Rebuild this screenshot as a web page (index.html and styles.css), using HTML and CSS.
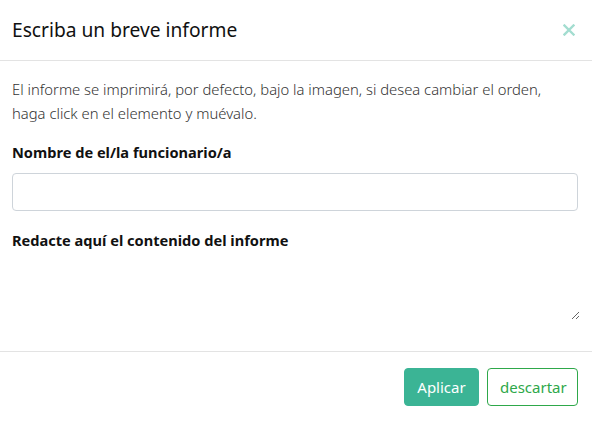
FILE: index.html
```html
<!DOCTYPE html>
<html lang="es">
<head>
<meta charset="utf-8">
<link rel="stylesheet" href="styles.css">
</head>
<body>
<div class="modal">
  <div class="modal-header">
    <h5 class="modal-title">Escriba un breve informe</h5>
    <button class="close" type="button" aria-label="Cerrar">
      <svg width="12" height="12" viewBox="0 0 12 12"><path d="M1.5 1.5L10.5 10.5M10.5 1.5L1.5 10.5" stroke="#a3ddd0" stroke-width="2.4" stroke-linecap="square"/></svg>
    </button>
  </div>
  <div class="modal-body">
    <p class="intro">El informe se imprimirá, por defecto, bajo la imagen, si desea cambiar el orden, haga click en el elemento y muévalo.</p>
    <label class="field-label" for="nombre">Nombre de el/la funcionario/a</label>
    <input class="form-control" id="nombre" type="text">
    <label class="field-label second" for="contenido">Redacte aquí el contenido del informe</label>
    <textarea class="plain-area" id="contenido"></textarea>
  </div>
  <div class="modal-footer">
    <button class="btn btn-primary" type="button">Aplicar</button>
    <button class="btn btn-outline" type="button">descartar</button>
  </div>
</div>
</body>
</html>
```
FILE: styles.css
```css
html, body {
  margin: 0;
  padding: 0;
  background: #fff;
}
body {
  font-family: "Noto Sans", "Open Sans", sans-serif;
  color: #212529;
}
.modal {
  width: 592px;
  height: 421px;
  display: flex;
  flex-direction: column;
  background: #fff;
}
.modal-header {
  height: 61px;
  box-sizing: border-box;
  padding: 0 12px;
  display: flex;
  align-items: center;
  justify-content: space-between;
  border-bottom: 1px solid #e3e3e3;
}
.modal-title {
  margin: 0;
  font-size: 19.2px;
  font-weight: 400;
  color: #111;
  line-height: 30px;
}
.close {
  border: 0;
  background: transparent;
  padding: 0;
  width: 20px;
  height: 20px;
  display: flex;
  align-items: center;
  justify-content: center;
  margin-right: 1px;
  margin-top: 0;
}
.modal-body {
  padding: 16px 12px 0;
  display: flex;
  flex-direction: column;
  height: 291px;
  box-sizing: border-box;
  border-bottom: 1px solid #e3e3e3;
}
.intro {
  margin: 0;
  padding-right: 30px;
  font-size: 14.8px;
  font-weight: 300;
  line-height: 24px;
  color: #333;
}
.field-label {
  margin-top: 15px;
  font-size: 14.6px;
  font-weight: 700;
  line-height: 24px;
  color: #111;
}
.field-label.second {
  margin-top: 17px;
}
.form-control {
  margin-top: 9px;
  width: 566px;
  height: 38px;
  box-sizing: border-box;
  border: 1px solid #ced4da;
  border-radius: 4px;
  padding: 6px 12px;
  font: inherit;
}
.plain-area {
  margin-top: 2px;
  height: 66px;
  border: 0;
  outline: 0;
  padding: 0;
  font: inherit;
  resize: vertical;
}
.modal-footer {
  flex: 1;
  display: flex;
  align-items: center;
  justify-content: flex-end;
  gap: 8px;
  padding: 0 14px;
}
.btn {
  height: 38px;
  box-sizing: border-box;
  border-radius: 4px;
  font-family: inherit;
  font-size: 15px;
  padding: 0 12px;
  cursor: pointer;
}
.btn-primary {
  background: #3bb495;
  border: 1px solid #3bb495;
  color: #fff;
  width: 75px;
}
.btn-outline {
  background: #fff;
  border: 1px solid #2ea84a;
  color: #2ea84a;
  width: 91px;
}
```
